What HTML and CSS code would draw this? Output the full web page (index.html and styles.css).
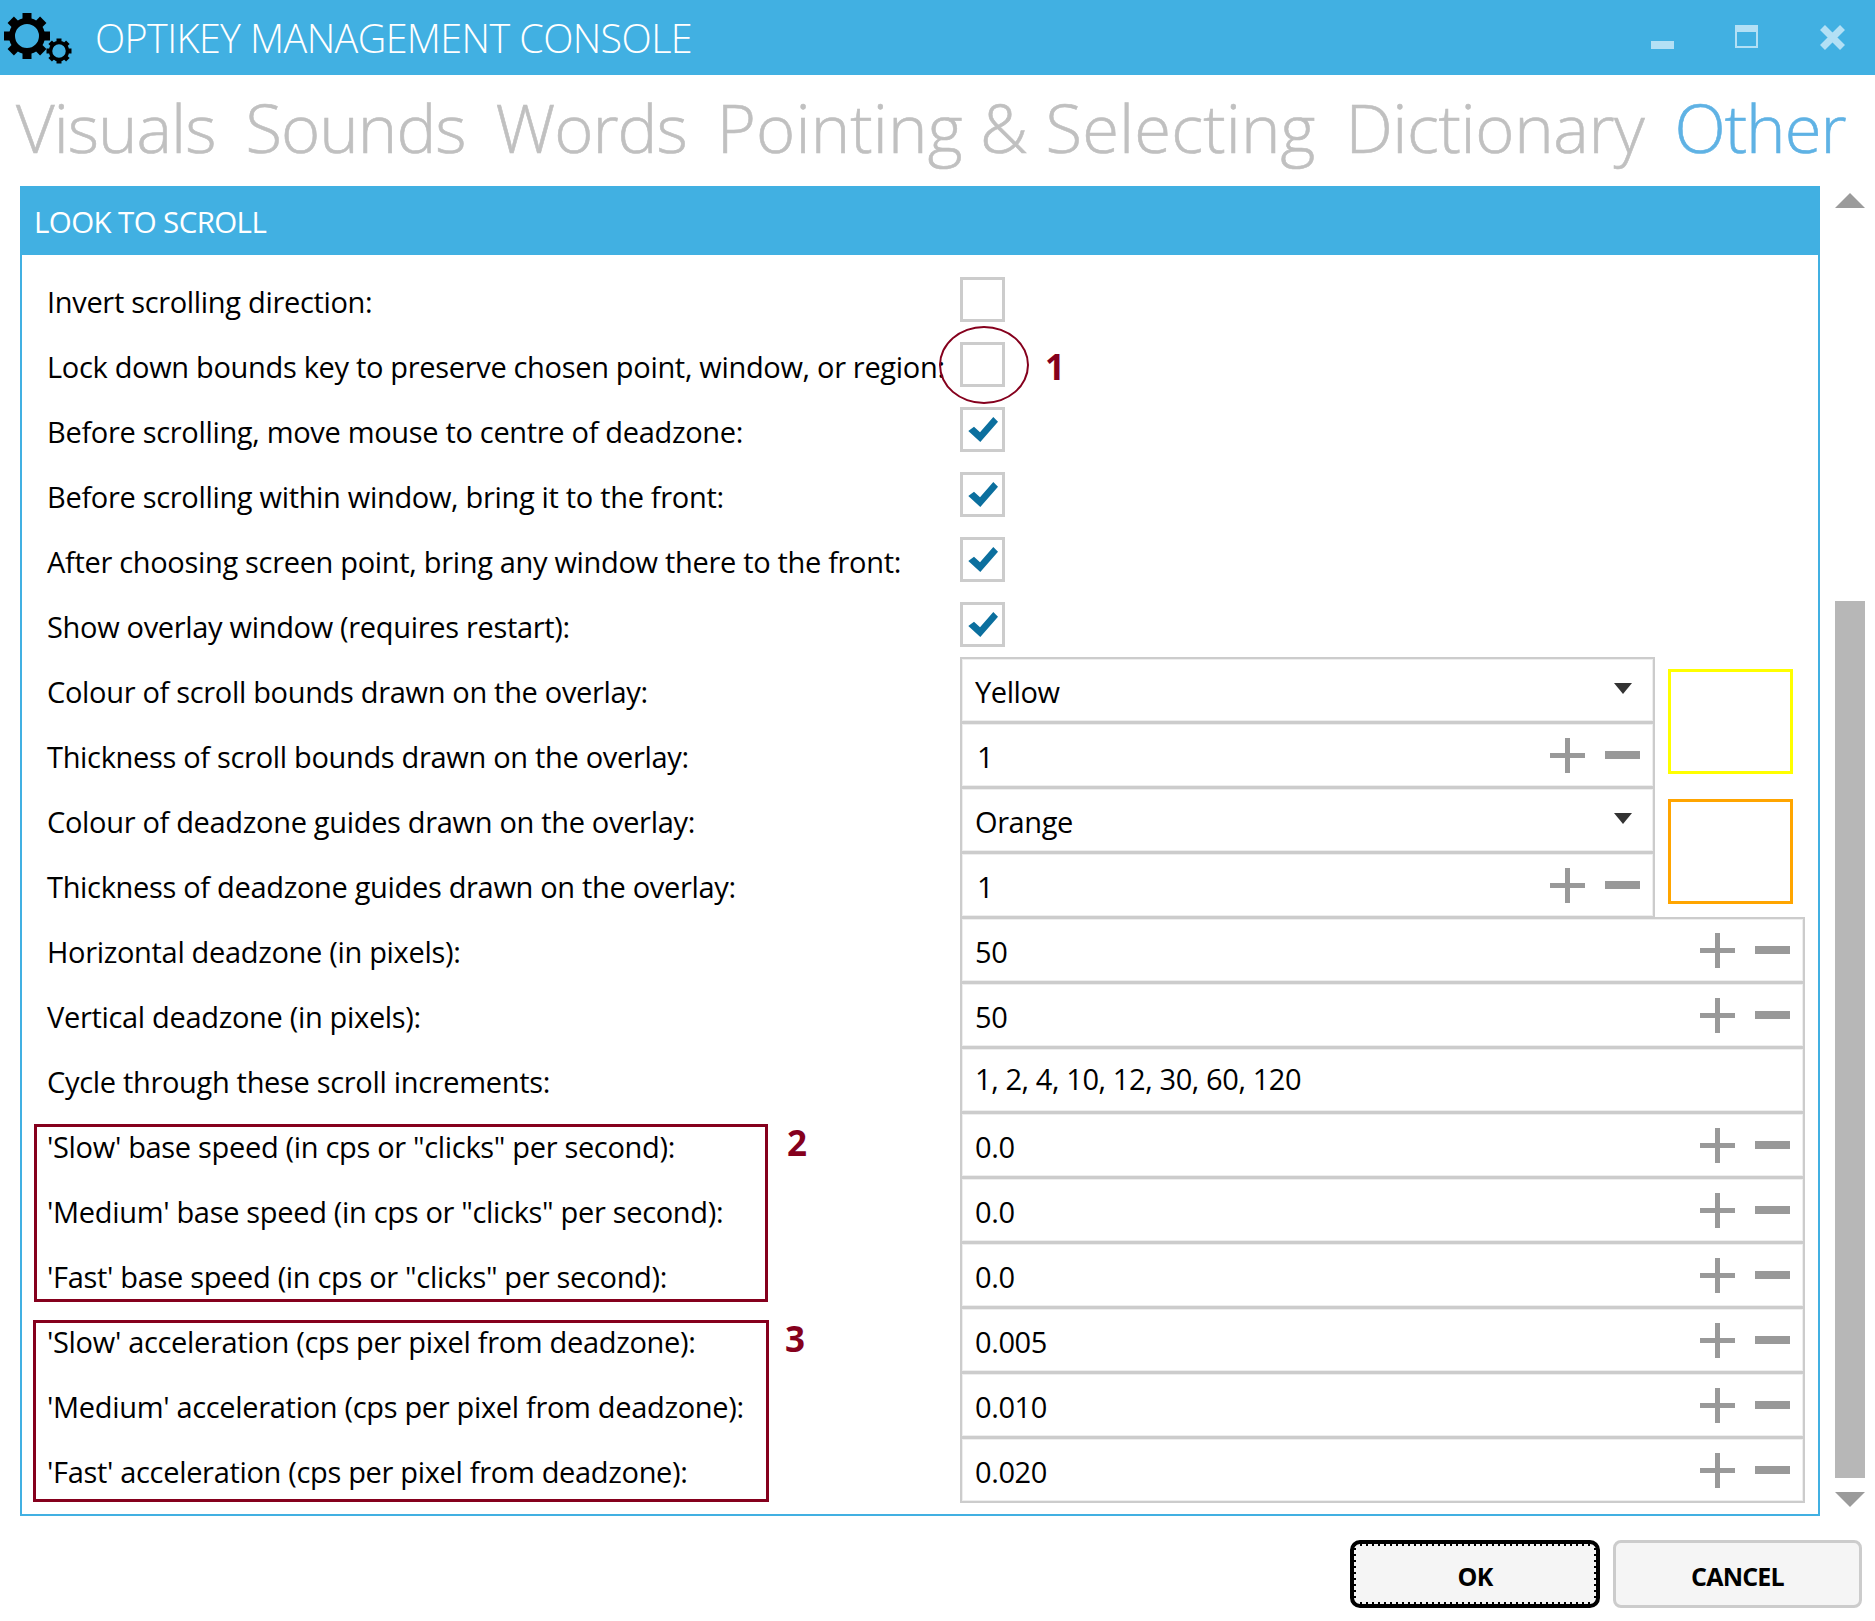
FILE: index.html
```html
<!DOCTYPE html>
<html lang="en">
<head>
  <meta charset="UTF-8" />
  <title>OptiKey Management Console</title>
  <link rel="stylesheet" href="styles.css">
</head>
<body>
  <header class="titlebar">
    <svg class="logo" width="76" height="75" viewBox="0 0 76 75">
      <defs>
        <rect id="tooth" x="-4.5" y="-23" width="9" height="10" />
        <rect id="tooth-sm" x="-2.5" y="-12.5" width="5" height="5" />
      </defs>
      <g transform="translate(27 36)">
        <circle r="15" fill="none" stroke="#000" stroke-width="6" />
        <use href="#tooth" /><use href="#tooth" transform="rotate(45)" />
        <use href="#tooth" transform="rotate(90)" /><use href="#tooth" transform="rotate(135)" />
        <use href="#tooth" transform="rotate(180)" /><use href="#tooth" transform="rotate(225)" />
        <use href="#tooth" transform="rotate(270)" /><use href="#tooth" transform="rotate(315)" />
      </g>
      <g transform="translate(59 51)">
        <circle r="8.5" fill="none" stroke="#000" stroke-width="3.5" />
        <use href="#tooth-sm" /><use href="#tooth-sm" transform="rotate(45)" />
        <use href="#tooth-sm" transform="rotate(90)" /><use href="#tooth-sm" transform="rotate(135)" />
        <use href="#tooth-sm" transform="rotate(180)" /><use href="#tooth-sm" transform="rotate(225)" />
        <use href="#tooth-sm" transform="rotate(270)" /><use href="#tooth-sm" transform="rotate(315)" />
      </g>
    </svg>
    <h1 class="app-title">OPTIKEY MANAGEMENT CONSOLE</h1>
    <div class="win-controls">
      <span class="win-min"></span>
      <span class="win-max"></span>
      <svg class="win-close" width="25" height="25" viewBox="0 0 25 25">
        <path d="M2.5 2.5 L22.5 22.5 M22.5 2.5 L2.5 22.5" stroke="#b3e0f5" stroke-width="7" />
      </svg>
    </div>
  </header>

  <nav class="tabs">
    <a>Visuals</a>
    <a>Sounds</a>
    <a>Words</a>
    <a class="open">Pointing &amp; Selecting</a>
    <a class="loose">Dictionary</a>
    <a class="active">Other</a>
  </nav>

  <main class="content">
    <section class="panel">
      <h2 class="panel-head">LOOK TO SCROLL</h2>
      <div class="form-grid">
        <div class="lbl">Invert scrolling direction:</div>
        <div class="check-cell"><span class="check"></span></div>

        <div class="lbl">Lock down bounds key to preserve chosen point, window, or region:</div>
        <div class="check-cell"><span class="check"></span></div>

        <div class="lbl">Before scrolling, move mouse to centre of deadzone:</div>
        <div class="check-cell"><span class="check"><svg viewBox="0 0 45 45"><path d="M8.3 24 L14 19.7 L20 25.3 L33.3 10 L38 14.7 L20.3 35 Z" /></svg></span></div>

        <div class="lbl">Before scrolling within window, bring it to the front:</div>
        <div class="check-cell"><span class="check"><svg viewBox="0 0 45 45"><path d="M8.3 24 L14 19.7 L20 25.3 L33.3 10 L38 14.7 L20.3 35 Z" /></svg></span></div>

        <div class="lbl">After choosing screen point, bring any window there to the front:</div>
        <div class="check-cell"><span class="check"><svg viewBox="0 0 45 45"><path d="M8.3 24 L14 19.7 L20 25.3 L33.3 10 L38 14.7 L20.3 35 Z" /></svg></span></div>

        <div class="lbl">Show overlay window (requires restart):</div>
        <div class="check-cell"><span class="check"><svg viewBox="0 0 45 45"><path d="M8.3 24 L14 19.7 L20 25.3 L33.3 10 L38 14.7 L20.3 35 Z" /></svg></span></div>

        <div class="lbl">Colour of scroll bounds drawn on the overlay:</div>
        <div class="field"><span class="val">Yellow</span><span class="caret"></span></div>
        <div class="swatch-cell"><span class="swatch yellow"></span></div>

        <div class="lbl">Thickness of scroll bounds drawn on the overlay:</div>
        <div class="field"><span class="val num">1</span><span class="plus"></span><span class="minus"></span></div>

        <div class="lbl">Colour of deadzone guides drawn on the overlay:</div>
        <div class="field"><span class="val">Orange</span><span class="caret"></span></div>
        <div class="swatch-cell"><span class="swatch orange"></span></div>

        <div class="lbl">Thickness of deadzone guides drawn on the overlay:</div>
        <div class="field"><span class="val num">1</span><span class="plus"></span><span class="minus"></span></div>

        <div class="lbl">Horizontal deadzone (in pixels):</div>
        <div class="field wide"><span class="val">50</span><span class="plus"></span><span class="minus"></span></div>

        <div class="lbl">Vertical deadzone (in pixels):</div>
        <div class="field wide"><span class="val">50</span><span class="plus"></span><span class="minus"></span></div>

        <div class="lbl">Cycle through these scroll increments:</div>
        <div class="field wide"><span class="val raised">1, 2, 4, 10, 12, 30, 60, 120</span></div>

        <div class="lbl">'Slow' base speed (in cps or "clicks" per second):</div>
        <div class="field wide"><span class="val">0.0</span><span class="plus"></span><span class="minus"></span></div>

        <div class="lbl">'Medium' base speed (in cps or "clicks" per second):</div>
        <div class="field wide"><span class="val">0.0</span><span class="plus"></span><span class="minus"></span></div>

        <div class="lbl">'Fast' base speed (in cps or "clicks" per second):</div>
        <div class="field wide"><span class="val">0.0</span><span class="plus"></span><span class="minus"></span></div>

        <div class="lbl">'Slow' acceleration (cps per pixel from deadzone):</div>
        <div class="field wide"><span class="val">0.005</span><span class="plus"></span><span class="minus"></span></div>

        <div class="lbl">'Medium' acceleration (cps per pixel from deadzone):</div>
        <div class="field wide"><span class="val">0.010</span><span class="plus"></span><span class="minus"></span></div>

        <div class="lbl">'Fast' acceleration (cps per pixel from deadzone):</div>
        <div class="field wide"><span class="val">0.020</span><span class="plus"></span><span class="minus"></span></div>
      </div>

      <!-- red callouts drawn over the form -->
      <span class="mark ellipse"></span>
      <span class="mark-num n1">1</span>
      <span class="mark box2"></span>
      <span class="mark-num n2">2</span>
      <span class="mark box3"></span>
      <span class="mark-num n3">3</span>
    </section>

    <aside class="scrollbar">
      <span class="arrow up"></span>
      <span class="thumb"></span>
      <span class="arrow down"></span>
    </aside>
  </main>

  <footer class="actions">
    <button class="btn focused"><span>OK</span></button>
    <button class="btn"><span>CANCEL</span></button>
  </footer>
</body>
</html>
```

FILE: styles.css
```css
html, body {
  margin: 0;
  padding: 0;
  background: #fff;
}
body {
  font-family: "Open Sans", "Noto Sans", sans-serif;
  color: #000;
  width: 1875px;
  height: 1621px;
  overflow: hidden;
}

/* title bar */
.titlebar {
  height: 75px;
  background: #41b0e2;
  display: flex;
  align-items: center;
}
.logo {
  flex: none;
  filter: blur(0.6px);
}
.app-title {
  margin: 0 0 0 19px;
  font-size: 39.5px;
  font-weight: 300;
  color: #fff;
  letter-spacing: -0.6px;
  white-space: nowrap;
}
.win-controls {
  margin-left: auto;
  margin-right: 30px;
  align-self: flex-start;
  margin-top: 25px;
  display: flex;
  align-items: flex-start;
}
.win-min {
  width: 23px;
  height: 8px;
  background: #b3e0f5;
  margin-top: 16px;
  margin-right: 61px;
}
.win-max {
  box-sizing: border-box;
  width: 23px;
  height: 23px;
  border: 2px solid #b3e0f5;
  border-top-width: 7px;
  margin-right: 62px;
}

/* tabs */
.tabs {
  height: 111px;
  display: flex;
  align-items: center;
  gap: 30px;
  padding-left: 16px;
  font-size: 67px;
  font-weight: 300;
  color: #c0c0c0;
  letter-spacing: -1px;
  white-space: nowrap;
  -webkit-text-stroke: 0.6px;
  line-height: 104px;
  padding-bottom: 7px;
  box-sizing: border-box;
}
.tabs .open {
  letter-spacing: 0.1px;
}
.tabs .loose {
  letter-spacing: -0.4px;
}
.tabs .active {
  color: #5fb2e4;
}

/* panel and scrollbar */
.content {
  display: flex;
  margin-left: 20px;
}
.panel {
  position: relative;
  width: 1800px;
  height: 1330px;
  box-sizing: border-box;
  border: 2px solid #41b0e2;
  border-top: 0;
}
.panel-head {
  margin: 0 -2px;
  height: 69px;
  line-height: 72px;
  padding-left: 14px;
  background: #41b0e2;
  color: #fff;
  font-size: 29.5px;
  font-weight: 400;
  letter-spacing: -0.6px;
}
.scrollbar {
  width: 30px;
  margin-left: 15px;
  height: 1330px;
  display: flex;
  flex-direction: column;
  align-items: center;
}
.thumb {
  width: 30px;
  height: 877px;
  margin-top: auto;
  background: #b7b7b7;
}
.arrow {
  width: 0;
  height: 0;
  border-left: 15px solid transparent;
  border-right: 15px solid transparent;
}
.arrow.up {
  margin-top: 7px;
  border-bottom: 15px solid #9b9b9b;
}
.arrow.down {
  margin-top: 14px;
  margin-bottom: 9px;
  border-top: 15px solid #9b9b9b;
}

/* form */
.form-grid {
  display: grid;
  grid-template-columns: 913px 695px 150px;
  grid-auto-rows: 65px;
  margin: 12px 0 0 25px;
}
.lbl {
  grid-column: 1;
  font-size: 29px;
  letter-spacing: -0.32px;
  line-height: 69px;
  white-space: nowrap;
}
.check-cell {
  grid-column: 2;
  display: flex;
  align-items: center;
}
.check {
  box-sizing: border-box;
  width: 45px;
  height: 45px;
  border: 3px solid #ccc;
  position: relative;
  display: block;
}
.check svg {
  position: absolute;
  left: -3px;
  top: -3px;
  width: 45px;
  height: 45px;
  fill: #0b6f9e;
}
.field {
  grid-column: 2;
  box-sizing: border-box;
  height: 66px;
  border: 2px solid #ccc;
  box-shadow: inset 0 0 0 1px #eee;
  display: flex;
  align-items: center;
  padding: 0 13px;
  gap: 20px;
  font-size: 29px;
  letter-spacing: -0.4px;
}
.field.wide {
  grid-column: 2 / span 2;
}
.val {
  margin-right: auto;
  position: relative;
  top: 1px;
}
.val.num {
  padding-left: 2px;
}
.val.raised {
  top: -2px;
}
.plus {
  width: 35px;
  height: 35px;
  background:
    linear-gradient(#999, #999) center / 100% 5px no-repeat,
    linear-gradient(#999, #999) center / 5px 100% no-repeat;
}
.minus {
  width: 35px;
  height: 8px;
  background: #999;
}
.caret {
  width: 0;
  height: 0;
  border-left: 9px solid transparent;
  border-right: 9px solid transparent;
  border-top: 11px solid #333;
  margin-right: 8px;
  margin-top: -4px;
}
.swatch-cell {
  grid-column: 3;
  grid-row: span 2;
  padding: 12px 0 0 13px;
}
.swatch {
  display: block;
  box-sizing: border-box;
  width: 125px;
  height: 105px;
  border: 3px solid;
}
.swatch.yellow { border-color: #ffff00; }
.swatch.orange { border-color: #ffa500; }

/* callouts, relative to .panel */
.mark {
  position: absolute;
  box-sizing: border-box;
  border: 3px solid #85001d;
}
.mark.ellipse {
  left: 917px;
  top: 140px;
  width: 90px;
  height: 78px;
  border-width: 2.5px;
  border-radius: 50%;
}
.mark.box2 {
  left: 12px;
  top: 938px;
  width: 734px;
  height: 178px;
}
.mark.box3 {
  left: 11px;
  top: 1134px;
  width: 736px;
  height: 182px;
}
.mark-num {
  position: absolute;
  font-size: 35px;
  font-weight: 700;
  line-height: 40px;
  color: #85001d;
}
.mark-num.n1 { left: 1023px; top: 161px; }
.mark-num.n2 { left: 765px; top: 937px; }
.mark-num.n3 { left: 763px; top: 1133px; }

/* bottom buttons */
.actions {
  display: flex;
  justify-content: flex-end;
  gap: 13px;
  padding: 24px 13px 0 0;
}
.btn {
  box-sizing: border-box;
  width: 249px;
  height: 68px;
  background: #f5f5f5;
  border: 3px solid #ccc;
  border-radius: 8px;
  padding: 4px 0 0;
  font-family: inherit;
  font-size: 25px;
  font-weight: 700;
  letter-spacing: -0.8px;
  color: #000;
}
.btn.focused {
  width: 250px;
  border: 4px solid #000;
  border-radius: 10px;
  /* focus rectangle: 2px dots every 6px just inside the border */
  background:
    repeating-linear-gradient(90deg, #000 0 2px, transparent 2px 6px) top / 100% 2px no-repeat,
    repeating-linear-gradient(90deg, #000 0 2px, transparent 2px 6px) bottom / 100% 2px no-repeat,
    repeating-linear-gradient(0deg, #000 0 2px, transparent 2px 6px) left / 2px 100% no-repeat,
    repeating-linear-gradient(0deg, #000 0 2px, transparent 2px 6px) right / 2px 100% no-repeat,
    #f5f5f5;
}
```
